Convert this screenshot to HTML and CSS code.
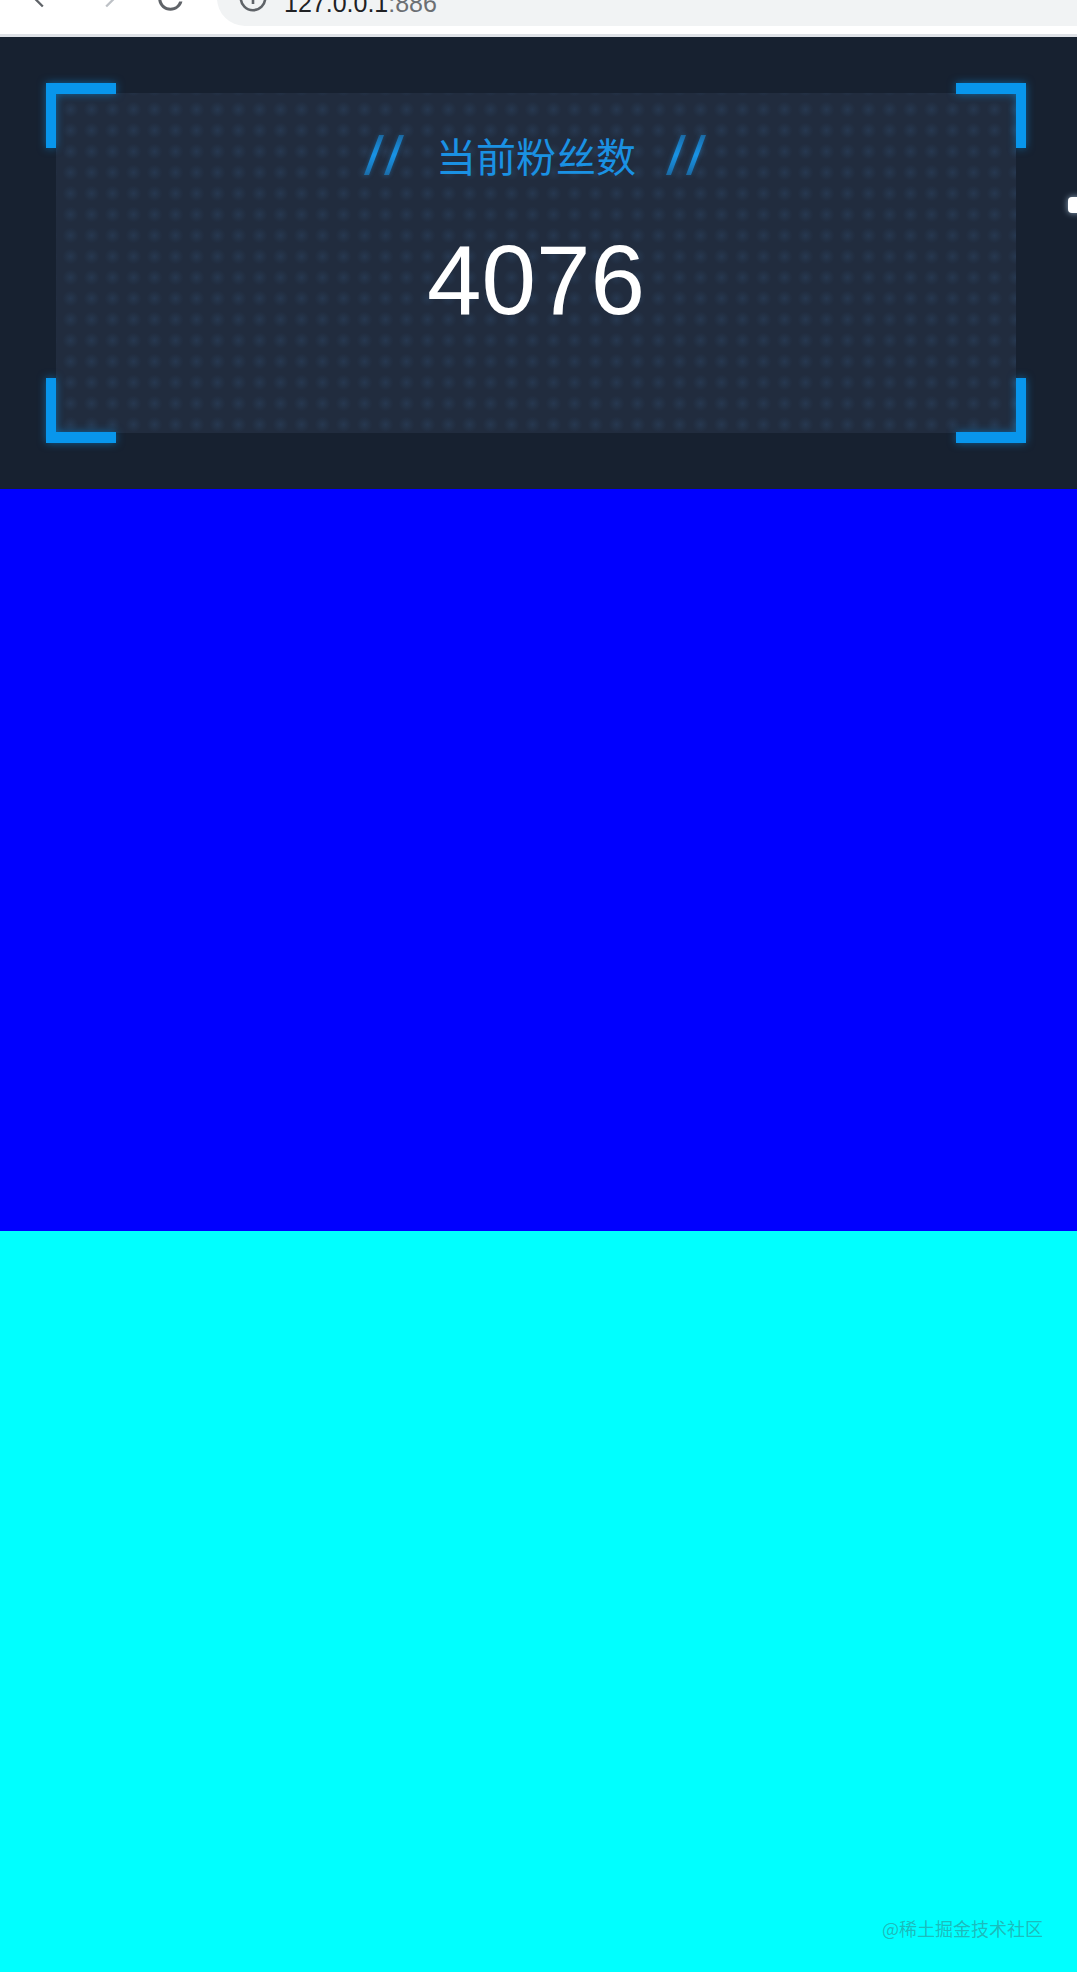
FILE: index.html
```html
<!DOCTYPE html>
<html lang="zh-CN">
<head>
<meta charset="utf-8">
<title>当前粉丝数</title>
<link rel="stylesheet" href="styles.css">
</head>
<body>
<div class="chrome">
  <div class="toolbar">
    <svg class="ic back" viewBox="0 0 24 24"><path d="M20 11H7.83l5.590-5.59L12 4l-8 8 8 8 1.41-1.41L7.83 13H20v-2z"/></svg>
    <svg class="ic fwd" viewBox="0 0 24 24"><path d="M4 11h12.17l-5.59-5.59L12 4l8 8-8 8-1.41-1.41L16.17 13H4v-2z"/></svg>
    <svg class="ic reload" viewBox="0 0 24 24"><path d="M17.65 6.35A7.958 7.958 0 0 0 12 4c-4.420 0-7.99 3.58-7.990 8s3.57 8 7.99 8c3.73 0 6.84-2.55 7.73-6h-2.08A5.99 5.99 0 0 1 12 18c-3.31 0-6-2.69-6-6s2.69-6 6-6c1.66 0 3.14.69 4.22 1.78L13 11h7V4l-2.35 2.35z"/></svg>
    <div class="omnibox">
      <svg class="info" viewBox="0 0 30 30"><circle cx="15" cy="15" r="12.2" fill="none" stroke="#5f6368" stroke-width="2.6"/><rect x="13.7" y="13" width="2.6" height="8" fill="#5f6368"/><rect x="13.7" y="8.5" width="2.6" height="2.6" fill="#5f6368"/></svg>
      <span class="url"><span class="host">127.0.0.1</span><span class="port">:886</span></span>
    </div>
  </div>
</div>
<main class="page">
  <section class="hero">
    <div class="frame">
      <i class="corner tl"></i>
      <i class="corner tr"></i>
      <i class="corner bl"></i>
      <i class="corner br"></i>
      <div class="panel">
        <div class="title">
          <svg class="slash" viewBox="0 0 42 40"><defs><linearGradient id="sg" x1="0" y1="1" x2="0" y2="0"><stop offset="0" stop-color="#1790e2" stop-opacity="0.55"/><stop offset="0.5" stop-color="#1994e6"/><stop offset="1" stop-color="#1790e2" stop-opacity="0.55"/></linearGradient></defs><polygon points="0,40 5,40 20,0 15,0" fill="url(#sg)"/><polygon points="20,40 25,40 40,0 35,0" fill="url(#sg)"/></svg>
          <span class="label">当前粉丝数</span>
          <svg class="slash" viewBox="0 0 42 40"><polygon points="0,40 5,40 20,0 15,0" fill="url(#sg)"/><polygon points="20,40 25,40 40,0 35,0" fill="url(#sg)"/></svg>
        </div>
        <div class="count">4076</div>
      </div>
    </div>
    <span class="peek"></span>
  </section>
  <section class="block blue"></section>
  <section class="block cyan">
    <span class="mark">@稀土掘金技术社区</span>
  </section>
</main>
</body>
</html>
```
FILE: styles.css
```css
html, body {
  margin: 0;
  padding: 0;
}
body {
  width: 1077px;
  overflow: hidden;
  font-family: "Liberation Sans", "Noto Sans CJK SC", sans-serif;
  background: #00ffff;
}

/* browser chrome */
.chrome {
  height: 34px;
  background: #ffffff;
  border-bottom: 3px solid #dee1e6;
  overflow: hidden;
}
.toolbar {
  display: flex;
  align-items: center;
  height: 56px;
  margin-top: -30px;
  padding-left: 28px;
}
.ic {
  flex: none;
  fill: #5f6368;
}
.back {
  width: 28px;
  height: 28px;
}
.fwd {
  width: 28px;
  height: 28px;
  margin-left: 37px;
  fill: #bdc1c6;
}
.reload {
  width: 37px;
  height: 37px;
  margin-left: 31px;
}
.omnibox {
  flex: 1;
  display: flex;
  align-items: center;
  height: 56px;
  margin-left: 28px;
  padding-left: 21px;
  background: #f1f3f4;
  border-radius: 28px 0 0 28px;
}
.info {
  flex: none;
  width: 30px;
  height: 30px;
}
.url {
  margin-left: 16px;
  padding-top: 10px;
  font-size: 25px;
  line-height: 25px;
  white-space: nowrap;
}
.host {
  color: #202124;
}
.port {
  color: #6b6f73;
}

/* hero */
.hero {
  position: relative;
  background: #172130;
  padding: 46px 51px 46px 46px;
  overflow: hidden;
}
.frame {
  position: relative;
  width: 980px;
  height: 360px;
  padding: 10px;
  box-sizing: border-box;
}
.corner {
  position: absolute;
  width: 70px;
  height: 65px;
  border: 0 solid #0896ec;
  box-sizing: border-box;
  filter: drop-shadow(0 0 4px rgba(8, 150, 236, 0.55));
}
.corner.tl { left: 0; top: 0; border-left-width: 10px; border-top-width: 11px; }
.corner.tr { right: 0; top: 0; border-right-width: 10px; border-top-width: 11px; }
.corner.bl { left: 0; bottom: 0; border-left-width: 10px; border-bottom-width: 11px; }
.corner.br { right: 0; bottom: 0; border-right-width: 10px; border-bottom-width: 11px; }

.panel {
  height: 100%;
  display: flex;
  flex-direction: column;
  align-items: center;
  padding-top: 42px;
  box-sizing: border-box;
  background-color: #212c3e;
  background-image: radial-gradient(circle, rgba(40, 60, 86, 0.75) 0, rgba(40, 60, 86, 0.35) 4px, rgba(33, 44, 62, 0) 8px);
  background-size: 21px 21px;
  background-position: 4px 6px;
}
.title {
  display: flex;
  align-items: center;
  gap: 30px;
  height: 40px;
}
.slash {
  width: 42px;
  height: 40px;
  flex: none;
  filter: drop-shadow(0 0 2px rgba(25, 148, 230, 0.5));
}
.label {
  font-family: "Noto Sans CJK SC", "Noto Sans", sans-serif;
  font-size: 40px;
  line-height: 40px;
  color: #1a91e3;
}
.count {
  margin-top: 56px;
  font-family: "Liberation Sans", Arial, sans-serif;
  font-size: 98px;
  line-height: 98px;
  color: #ffffff;
}
.peek {
  position: absolute;
  left: 1068px;
  top: 160px;
  width: 14px;
  height: 16px;
  background: #ffffff;
  border-radius: 4px;
  box-shadow: 0 0 6px rgba(200, 230, 255, 0.7);
}

/* colour blocks */
.block {
  height: 742px;
}
.blue {
  background: #0000ff;
}
.cyan {
  position: relative;
  height: 741px;
  background: #00ffff;
}
.mark {
  position: absolute;
  right: 34px;
  bottom: 33px;
  font-family: "Noto Sans CJK SC", sans-serif;
  font-size: 18px;
  line-height: 22px;
  color: rgba(70, 80, 80, 0.4);
  white-space: nowrap;
}
```
